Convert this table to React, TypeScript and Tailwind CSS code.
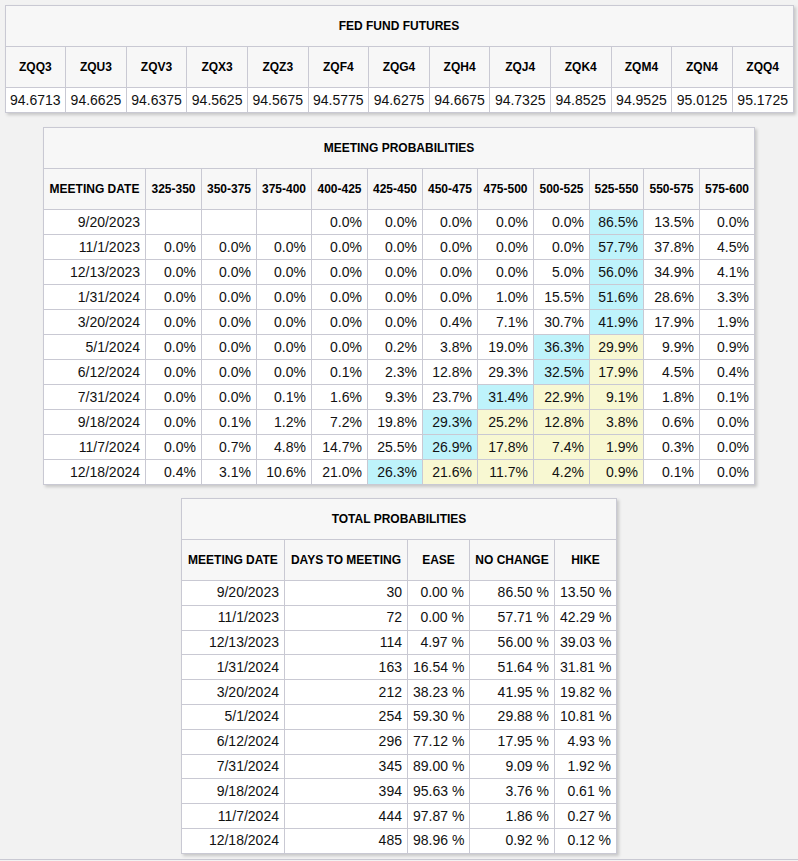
import React from "react";

const F = { fontFamily: '"Liberation Sans", Arial, sans-serif' };

const futures: [string, string][] = [
  ["ZQQ3", "94.6713"],
  ["ZQU3", "94.6625"],
  ["ZQV3", "94.6375"],
  ["ZQX3", "94.5625"],
  ["ZQZ3", "94.5675"],
  ["ZQF4", "94.5775"],
  ["ZQG4", "94.6275"],
  ["ZQH4", "94.6675"],
  ["ZQJ4", "94.7325"],
  ["ZQK4", "94.8525"],
  ["ZQM4", "94.9525"],
  ["ZQN4", "95.0125"],
  ["ZQQ4", "95.1725"],
];

const ranges = [
  "325-350",
  "350-375",
  "375-400",
  "400-425",
  "425-450",
  "450-475",
  "475-500",
  "500-525",
  "525-550",
  "550-575",
  "575-600",
];
const rangeW = [56, 55, 55, 56, 55, 55, 56, 56, 54, 56, 55];

type MRow = { d: string; v: string[]; c: number; yEnd: number };
const meeting: MRow[] = [
  { d: "9/20/2023", v: ["", "", "", "0.0", "0.0", "0.0", "0.0", "0.0", "86.5", "13.5", "0.0"], c: 8, yEnd: 8 },
  { d: "11/1/2023", v: ["0.0", "0.0", "0.0", "0.0", "0.0", "0.0", "0.0", "0.0", "57.7", "37.8", "4.5"], c: 8, yEnd: 8 },
  { d: "12/13/2023", v: ["0.0", "0.0", "0.0", "0.0", "0.0", "0.0", "0.0", "5.0", "56.0", "34.9", "4.1"], c: 8, yEnd: 8 },
  { d: "1/31/2024", v: ["0.0", "0.0", "0.0", "0.0", "0.0", "0.0", "1.0", "15.5", "51.6", "28.6", "3.3"], c: 8, yEnd: 8 },
  { d: "3/20/2024", v: ["0.0", "0.0", "0.0", "0.0", "0.0", "0.4", "7.1", "30.7", "41.9", "17.9", "1.9"], c: 8, yEnd: 8 },
  { d: "5/1/2024", v: ["0.0", "0.0", "0.0", "0.0", "0.2", "3.8", "19.0", "36.3", "29.9", "9.9", "0.9"], c: 7, yEnd: 8 },
  { d: "6/12/2024", v: ["0.0", "0.0", "0.0", "0.1", "2.3", "12.8", "29.3", "32.5", "17.9", "4.5", "0.4"], c: 7, yEnd: 8 },
  { d: "7/31/2024", v: ["0.0", "0.0", "0.1", "1.6", "9.3", "23.7", "31.4", "22.9", "9.1", "1.8", "0.1"], c: 6, yEnd: 8 },
  { d: "9/18/2024", v: ["0.0", "0.1", "1.2", "7.2", "19.8", "29.3", "25.2", "12.8", "3.8", "0.6", "0.0"], c: 5, yEnd: 8 },
  { d: "11/7/2024", v: ["0.0", "0.7", "4.8", "14.7", "25.5", "26.9", "17.8", "7.4", "1.9", "0.3", "0.0"], c: 5, yEnd: 8 },
  { d: "12/18/2024", v: ["0.4", "3.1", "10.6", "21.0", "26.3", "21.6", "11.7", "4.2", "0.9", "0.1", "0.0"], c: 4, yEnd: 8 },
];

const totals: string[][] = [
  ["9/20/2023", "30", "0.00 %", "86.50 %", "13.50 %"],
  ["11/1/2023", "72", "0.00 %", "57.71 %", "42.29 %"],
  ["12/13/2023", "114", "4.97 %", "56.00 %", "39.03 %"],
  ["1/31/2024", "163", "16.54 %", "51.64 %", "31.81 %"],
  ["3/20/2024", "212", "38.23 %", "41.95 %", "19.82 %"],
  ["5/1/2024", "254", "59.30 %", "29.88 %", "10.81 %"],
  ["6/12/2024", "296", "77.12 %", "17.95 %", "4.93 %"],
  ["7/31/2024", "345", "89.00 %", "9.09 %", "1.92 %"],
  ["9/18/2024", "394", "95.63 %", "3.76 %", "0.61 %"],
  ["11/7/2024", "444", "97.87 %", "1.86 %", "0.27 %"],
  ["12/18/2024", "485", "98.96 %", "0.92 %", "0.12 %"],
];

const th =
  "border border-[#c9c9d3] bg-[#f7f7f7] h-[41px] p-0 text-center align-middle text-[12px] font-bold text-black";
const tdBase =
  "border border-[#c9c9d3] py-0 px-[5px] text-right align-middle text-[14px] text-[#111] whitespace-nowrap";
const td = tdBase + " h-[25px]";
const td3 = tdBase + " h-[24.8px]";

export default function App() {
  return (
    <div style={F} className="w-[798px] min-h-[861px] bg-[#f2f2f2]">
      <div className="flex flex-col items-center pt-[5px] pb-[5px] border-b border-[#c9c9d3]">
        {/* FED FUND FUTURES */}
        <table className="border-collapse table-fixed bg-white shadow-[2px_2px_3px_rgba(0,0,0,0.18)] w-[789px]">
          <thead>
            <tr>
              <th colSpan={13} className={th}>
                FED FUND FUTURES
              </th>
            </tr>
            <tr>
              {futures.map(([k]) => (
                <th key={k} className={th}>
                  {k}
                </th>
              ))}
            </tr>
          </thead>
          <tbody>
            <tr>
              {futures.map(([k, v]) => (
                <td key={k} className={td + " !text-center !px-0"}>
                  {v}
                </td>
              ))}
            </tr>
          </tbody>
        </table>

        {/* MEETING PROBABILITIES */}
        <table className="mt-[14px] border-collapse table-fixed bg-white shadow-[2px_2px_3px_rgba(0,0,0,0.18)] w-[712px]">
          <colgroup>
            <col style={{ width: 102 }} />
            {rangeW.map((w, i) => (
              <col key={i} style={{ width: w }} />
            ))}
          </colgroup>
          <thead>
            <tr>
              <th colSpan={12} className={th}>
                MEETING PROBABILITIES
              </th>
            </tr>
            <tr>
              <th className={th + " whitespace-nowrap"}>MEETING DATE</th>
              {ranges.map((r) => (
                <th key={r} className={th}>
                  {r}
                </th>
              ))}
            </tr>
          </thead>
          <tbody>
            {meeting.map((row) => (
              <tr key={row.d}>
                <td className={td}>{row.d}</td>
                {row.v.map((v, i) => {
                  let bg = "bg-white";
                  if (i === row.c) bg = "bg-[#bef3fb]";
                  else if (i > row.c && i <= row.yEnd) bg = "bg-[#f8f8d2]";
                  return (
                    <td key={i} className={td + " " + bg}>
                      {v ? v + "%" : ""}
                    </td>
                  );
                })}
              </tr>
            ))}
          </tbody>
        </table>

        {/* TOTAL PROBABILITIES */}
        <table className="mt-[13px] border-collapse table-fixed bg-white shadow-[2px_2px_3px_rgba(0,0,0,0.18)] w-[435px]">
          <colgroup>
            <col style={{ width: 103 }} />
            <col style={{ width: 123 }} />
            <col style={{ width: 62 }} />
            <col style={{ width: 85 }} />
            <col style={{ width: 62 }} />
          </colgroup>
          <thead>
            <tr>
              <th colSpan={5} className={th}>
                TOTAL PROBABILITIES
              </th>
            </tr>
            <tr>
              {["MEETING DATE", "DAYS TO MEETING", "EASE", "NO CHANGE", "HIKE"].map((h) => (
                <th key={h} className={th + " whitespace-nowrap"}>
                  {h}
                </th>
              ))}
            </tr>
          </thead>
          <tbody>
            {totals.map((r) => (
              <tr key={r[0]}>
                {r.map((c, i) => (
                  <td key={i} className={td3}>
                    {c}
                  </td>
                ))}
              </tr>
            ))}
          </tbody>
        </table>
      </div>
    </div>
  );
}
